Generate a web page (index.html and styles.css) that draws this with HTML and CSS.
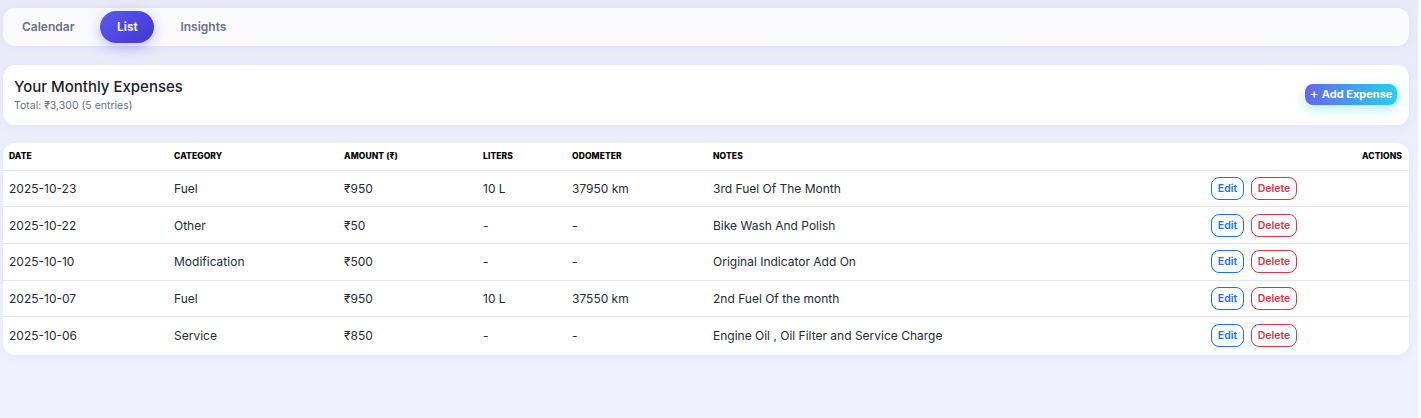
FILE: index.html
```html
<!DOCTYPE html>
<html lang="en">
<head>
<meta charset="utf-8">
<title>Expenses</title>
<link rel="stylesheet" href="styles.css">
</head>
<body>
<div class="page">
  <nav class="tabs">
    <button class="tab">Calendar</button>
    <button class="tab active">List</button>
    <button class="tab">Insights</button>
  </nav>

  <section class="card summary">
    <div class="summary-text">
      <h1 class="title">Your Monthly Expenses</h1>
      <p class="subtitle">Total: ₹3,300 (5 entries)</p>
    </div>
    <button class="add-btn"><span class="plus">+</span> Add Expense</button>
  </section>

  <section class="card table-card">
    <table class="expenses">
      <colgroup>
        <col class="c-date"><col class="c-cat"><col class="c-amt"><col class="c-lit"><col class="c-odo"><col class="c-notes"><col class="c-act">
      </colgroup>
      <thead>
        <tr>
          <th>Date</th><th>Category</th><th>Amount (₹)</th><th>Liters</th><th>Odometer</th><th>Notes</th><th class="right">Actions</th>
        </tr>
      </thead>
      <tbody>
        <tr><td>2025-10-23</td><td>Fuel</td><td>₹950</td><td>10 L</td><td>37950 km</td><td>3rd Fuel Of The Month</td><td><div class="actions"><button class="btn edit">Edit</button><button class="btn del">Delete</button></div></td></tr>
        <tr><td>2025-10-22</td><td>Other</td><td>₹50</td><td>-</td><td>-</td><td>Bike Wash And Polish</td><td><div class="actions"><button class="btn edit">Edit</button><button class="btn del">Delete</button></div></td></tr>
        <tr><td>2025-10-10</td><td>Modification</td><td>₹500</td><td>-</td><td>-</td><td>Original Indicator Add On</td><td><div class="actions"><button class="btn edit">Edit</button><button class="btn del">Delete</button></div></td></tr>
        <tr><td>2025-10-07</td><td>Fuel</td><td>₹950</td><td>10 L</td><td>37550 km</td><td>2nd Fuel Of the month</td><td><div class="actions"><button class="btn edit">Edit</button><button class="btn del">Delete</button></div></td></tr>
        <tr><td>2025-10-06</td><td>Service</td><td>₹850</td><td>-</td><td>-</td><td>Engine Oil , Oil Filter and Service Charge</td><td><div class="actions"><button class="btn edit">Edit</button><button class="btn del">Delete</button></div></td></tr>
      </tbody>
    </table>
  </section>
</div>
</body>
</html>
```

FILE: styles.css
```css
* { box-sizing: border-box; }
html, body { margin: 0; padding: 0; height: 100%; }
body {
  font-family: Inter, "Noto Sans", sans-serif;
  background: linear-gradient(180deg, #e8e8f8 0%, #eef0fc 40%, #eff2fe 100%);
  color: #212529;
  border-right: 3px solid #fdfdff;
}
.page {
  width: 1406px;
  margin-left: 3px;
  padding-top: 8px;
  display: flex;
  flex-direction: column;
}
.tabs {
  height: 38px;
  background: rgba(255, 255, 255, 0.78);
  border-radius: 12px;
  box-shadow: 0 2px 8px rgba(99, 102, 241, 0.06);
  display: flex;
  align-items: center;
  padding-left: 5px;
  gap: 8px;
}
.tab {
  border: none;
  background: transparent;
  font-family: inherit;
  font-size: 12px;
  font-weight: 600;
  color: #6b7280;
  height: 32px;
  padding: 0 14px 1px;
  border-radius: 16px;
  cursor: pointer;
}
.tab.active {
  color: #fff;
  width: 54px;
  padding: 0 0 1px;
  margin: 0 4px 0 4px;
  background: linear-gradient(135deg, #5b5ce8 0%, #4f46e5 50%, #4338ca 100%);
  box-shadow: 0 4px 14px rgba(79, 70, 229, 0.35);
}
.card {
  background: #fff;
  border-radius: 12px;
  box-shadow: 0 2px 10px rgba(99, 102, 241, 0.08);
}
.summary {
  margin-top: 19px;
  height: 60px;
  display: flex;
  align-items: center;
  justify-content: space-between;
  padding: 0 12px 0 11px;
}
.summary-text { padding-bottom: 1px; }
.title {
  margin: 0;
  font-size: 15px;
  font-weight: 500;
  color: #1f2328;
  line-height: 20px;
}
.subtitle {
  margin: 2px 0 0;
  font-size: 10.5px;
  color: #6b6f76;
  line-height: 14px;
}
.add-btn {
  border: none;
  font-family: inherit;
  font-size: 11px;
  font-weight: 700;
  color: #fff;
  height: 21px;
  width: 92px;
  padding: 0;
  margin-top: -2px;
  border-radius: 8px;
  background: linear-gradient(90deg, #6366f1 0%, #22d3ee 100%);
  box-shadow: 0 4px 12px rgba(34, 211, 238, 0.35);
  display: flex;
  align-items: center;
  justify-content: center;
  gap: 3px;
}
.plus { font-weight: 400; font-size: 14px; line-height: 1; margin-top: -2px; }
.table-card {
  margin-top: 18px;
  padding: 0;
  overflow: hidden;
}
.expenses {
  width: 100%;
  border-collapse: collapse;
  table-layout: fixed;
}
.c-date { width: 165px; }
.c-cat { width: 170px; }
.c-amt { width: 139px; }
.c-lit { width: 89px; }
.c-odo { width: 141px; }
.c-notes { width: 498px; }
.c-act { width: 204px; }
th {
  text-align: left;
  font-size: 8.5px;
  font-weight: 800;
  color: #000;
  text-transform: uppercase;
  height: 27px;
  padding: 0 6px;
  border-bottom: 1px solid #e3e6ea;
  letter-spacing: 0.1px;
}
th.right { text-align: right; padding-right: 7px; }
td {
  font-size: 12px;
  color: #262a2f;
  height: 36.7px;
  padding: 0 6px;
  border-bottom: 1px solid #e3e6ea;
  white-space: nowrap;
}
tbody tr:last-child td { border-bottom: none; height: 38px; padding-bottom: 1px; }
.actions { display: flex; gap: 7px; }
.btn {
  font-family: inherit;
  font-size: 10.5px;
  font-weight: 600;
  background: #fff;
  height: 23px;
  border-radius: 8px;
  padding: 0;
  cursor: pointer;
}
.btn.edit { width: 33px; color: #1a73e8; border: 1px solid #1a73e8; }
.btn.del { width: 46px; color: #dc3545; border: 1px solid #dc3545; }
```
